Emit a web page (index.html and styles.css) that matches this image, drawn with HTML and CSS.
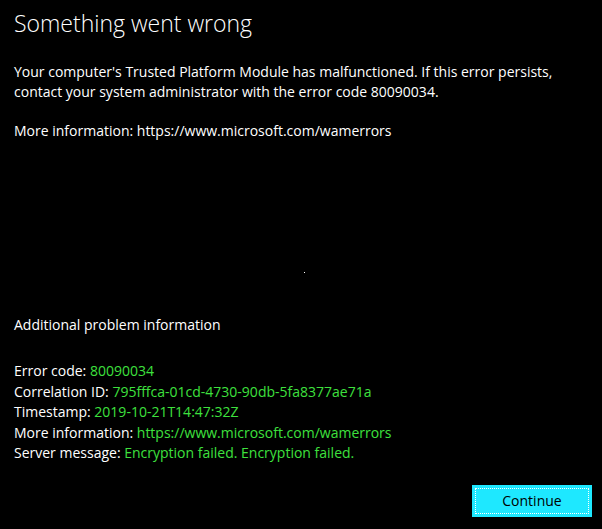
FILE: index.html
```html
<!DOCTYPE html>
<html>
<head>
<meta charset="utf-8">
<link rel="stylesheet" href="styles.css">
</head>
<body>
<div class="page">
  <h1 class="title">Something went wrong</h1>
  <p class="msg">Your computer's Trusted Platform Module has malfunctioned. If this error persists, contact your system administrator with the error code 80090034.</p>
  <p class="msg more">More information: https://www.microsoft.com/wamerrors</p>
  <div class="middle"><span class="dot"></span></div>
  <p class="msg addl">Additional problem information</p>
  <div class="details">
    <div>Error code: <span class="val">80090034</span></div>
    <div>Correlation ID: <span class="val">795fffca-01cd-4730-90db-5fa8377ae71a</span></div>
    <div>Timestamp: <span class="val">2019-10-21T14:47:32Z</span></div>
    <div>More information: <span class="val">https://www.microsoft.com/wamerrors</span></div>
    <div>Server message: <span class="val">Encryption failed. Encryption failed.</span></div>
  </div>
  <div class="actions"><button class="btn">Continue</button></div>
</div>
</body>
</html>
```
FILE: styles.css
```css
html, body {
  margin: 0;
  padding: 0;
  background: #000;
  width: 602px;
  height: 529px;
  overflow: hidden;
}
.page {
  box-sizing: border-box;
  height: 529px;
  padding: 7px 10px 0 14px;
  display: flex;
  flex-direction: column;
  color: #fff;
  font-family: "Open Sans", "Noto Sans", sans-serif;
  font-size: 14px;
  line-height: 20px;
}
.title {
  margin: 0;
  font-size: 23px;
  font-weight: 300;
  line-height: 32px;
}
.msg { margin: 0; }
.title + .msg { margin-top: 23px; }
.more { margin-top: 19px; }
.middle {
  height: 174px;
  position: relative;
}
.dot {
  position: absolute;
  left: 290px;
  top: 131px;
  width: 1px;
  height: 1px;
  background: #fff;
}
.addl { margin-top: 0; }
.details { margin-top: 26px; line-height: 20.5px; }
.val { color: #3ee03e; }
.actions {
  display: flex;
  justify-content: flex-end;
  margin-top: 21px;
}
.btn {
  width: 120px;
  height: 32px;
  background: #1ee8ff;
  border: 0;
  outline: 1px dotted #fff;
  outline-offset: -4px;
  font-family: inherit;
  font-size: 14px;
  color: #000;
  padding: 0;
}
```
